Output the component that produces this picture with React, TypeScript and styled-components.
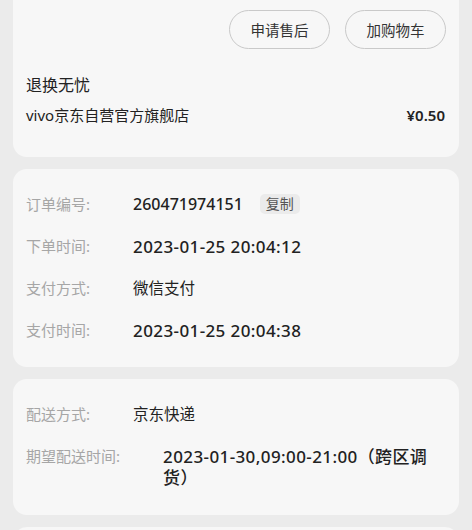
import styled, { createGlobalStyle } from 'styled-components'

const GlobalStyle = createGlobalStyle`
  html, body {
    margin: 0;
    padding: 0;
    background: #ebebeb;
  }
  body {
    font-family: "Noto Sans", "Noto Sans CJK SC", sans-serif;
    color: #222;
  }
`

type Row = { label: string; value: string; kind?: 'num' | 'code' | 'text'; copy?: boolean }

const orderRows: Row[] = [
  { label: '订单编号:', value: '260471974151', kind: 'code', copy: true },
  { label: '下单时间:', value: '2023-01-25 20:04:12', kind: 'num' },
  { label: '支付方式:', value: '微信支付' },
  { label: '支付时间:', value: '2023-01-25 20:04:38', kind: 'num' },
]

const deliveryRows: Row[] = [
  { label: '配送方式:', value: '京东快递' },
  { label: '期望配送时间:', value: '2023-01-30,09:00-21:00（跨区调货）', kind: 'num' },
]

export default function App() {
  return (
    <>
      <GlobalStyle />
      <Page>
        <GoodsCard>
          <ActionBar>
            <PillButton>申请售后</PillButton>
            <PillButton>加购物车</PillButton>
          </ActionBar>
          <ServiceTag>退换无忧</ServiceTag>
          <ShopRow>
            <ShopName>vivo京东自营官方旗舰店</ShopName>
            <Price>¥0.50</Price>
          </ShopRow>
        </GoodsCard>

        <InfoCard>
          {orderRows.map(row => (
            <InfoRow key={row.label}>
              <Label>{row.label}</Label>
              <Value $kind={row.kind ?? 'text'}>{row.value}</Value>
              {row.copy && <CopyChip>复制</CopyChip>}
            </InfoRow>
          ))}
        </InfoCard>

        <InfoCard $bottom={17}>
          {deliveryRows.map(row => (
            <InfoRow key={row.label}>
              <Label>{row.label}</Label>
              <Value $kind={row.kind ?? 'text'}>{row.value}</Value>
            </InfoRow>
          ))}
        </InfoCard>

        <InfoCard $bottom={40} />
      </Page>
    </>
  )
}

const Page = styled.div`
  display: flex;
  flex-direction: column;
  gap: 12px;
  padding: 0 13px;
  height: 530px;
  overflow: hidden;
`

const Card = styled.div`
  background: #f7f7f7;
  border-radius: 14px;
  flex-shrink: 0;
`

const GoodsCard = styled(Card)`
  border-radius: 0 0 14px 14px;
  padding: 10px 13px 32px 13px;
  display: flex;
  flex-direction: column;
`

const ActionBar = styled.div`
  display: flex;
  justify-content: flex-end;
  gap: 15px;
`

const PillButton = styled.button`
  width: 101px;
  height: 39px;
  border: 1px solid #c9c9c9;
  border-radius: 20px;
  background: transparent;
  color: #333;
  font-family: inherit;
  font-size: 14.5px;
  padding: 0;
`

const ServiceTag = styled.div`
  margin-top: 26px;
  font-size: 16px;
  line-height: 20px;
  color: #222;
`

const ShopRow = styled.div`
  display: flex;
  justify-content: space-between;
  align-items: center;
  margin-top: 10px;
  line-height: 20px;
`

const ShopName = styled.span`
  font-size: 15px;
  color: #222;
`

const Price = styled.span`
  font-size: 15px;
  font-weight: 600;
  color: #222;
  margin-right: 1px;
`

const InfoCard = styled(Card)<{ $bottom?: number }>`
  padding: 14px 16px ${p => p.$bottom ?? 16}px 13px;
  min-height: 40px;
`

const InfoRow = styled.div`
  display: flex;
  align-items: flex-start;
  padding: 10px 0;
  line-height: 22px;
`

const Label = styled.span`
  flex-shrink: 0;
  font-size: 15px;
  color: #a6a6a6;
  margin-right: 43px;
`

const valueSize = { num: '17px', code: '16px', text: '15.5px' }

const Value = styled.span<{ $kind: 'num' | 'code' | 'text' }>`
  font-size: ${p => valueSize[p.$kind]};
  font-weight: ${p => (p.$kind === 'text' ? 400 : 500)};
  letter-spacing: ${p => (p.$kind === 'num' ? '0.4px' : '0')};
  line-height: 21px;
  padding-top: 1px;
  color: #222;
`

const CopyChip = styled.span`
  margin-left: 17px;
  margin-top: 1px;
  padding: 0 6px;
  height: 20px;
  line-height: 20px;
  border-radius: 5px;
  background: #ebebeb;
  color: #555;
  font-size: 14px;
`
